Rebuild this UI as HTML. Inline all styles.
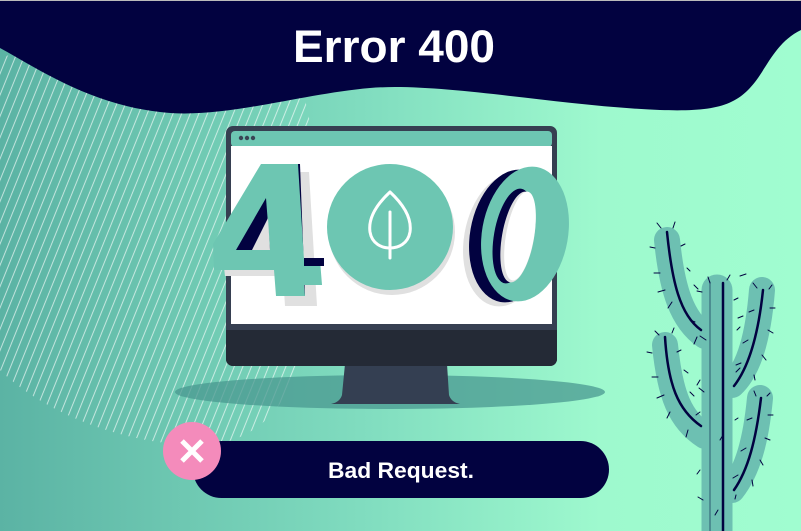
<!DOCTYPE html>
<html><head><meta charset="utf-8"><style>
html,body{margin:0;padding:0;width:801px;height:531px;overflow:hidden}
svg{display:block}
</style></head><body>
<svg width="801" height="531" viewBox="0 0 801 531" xmlns="http://www.w3.org/2000/svg">
<defs>
<linearGradient id="bg" x1="0" y1="0" x2="1" y2="0">
<stop offset="0" stop-color="#5bb3a4"/><stop offset="0.45" stop-color="#80dcbf"/><stop offset="0.75" stop-color="#9ef9ce"/><stop offset="1" stop-color="#a0fdd0"/>
</linearGradient>
<pattern id="hatch" width="8.6" height="531" patternUnits="userSpaceOnUse" patternTransform="skewX(-22)">
<line x1="4" y1="0" x2="4" y2="531" stroke="#ffffff" stroke-opacity="0.75" stroke-width="0.9"/>
</pattern>
<clipPath id="hc"><path d="M0 60 C60 20 230 0 290 60 C320 110 325 250 310 330 C295 400 260 445 200 445 C120 445 40 410 0 370 Z"/></clipPath>
</defs>
<rect width="801" height="531" fill="url(#bg)"/>
<rect width="801" height="531" fill="url(#hatch)" clip-path="url(#hc)"/>
<path d="M0 0 H801 V30 C780 40 770 60 760 75 C740 105 720 112 660 110 C560 106 440 82 370 88 C300 94 220 120 160 112 C90 104 40 70 0 48 Z" fill="#020240"/>
<rect x="0" y="0" width="801" height="1" fill="#bbbbbb"/>
<text x="293" y="62" textLength="202" lengthAdjust="spacingAndGlyphs" font-family="Liberation Sans, sans-serif" font-weight="bold" font-size="45" fill="#fff">Error 400</text>
<ellipse cx="390" cy="392" rx="215" ry="17" fill="#4a9890" opacity="0.75"/>
<path d="M345 364 H447 L449 395 Q451 402 460 404 H331 Q340 402 342 395 Z" fill="#343f52"/>
<rect x="226" y="126" width="331" height="240" rx="7" fill="#363f51"/>
<rect x="226" y="330" width="331" height="36" rx="7" fill="#242a36"/>
<rect x="226" y="330" width="331" height="10" fill="#242a36"/>
<rect x="231" y="131" width="321" height="16" rx="4" fill="#6dc6b2"/>
<rect x="231" y="146" width="321" height="178" fill="#ffffff"/>
<circle cx="241" cy="138" r="2.2" fill="#3a4455"/><circle cx="247" cy="138" r="2.2" fill="#3a4455"/><circle cx="253" cy="138" r="2.2" fill="#3a4455"/>
<!-- 4 -->
<g transform="translate(9,6)" fill="#e0e0e0"><path d="M261 166 H300 L308 300 H276 L274 270 H216 L213 244 Z M272 195 L240 246 H275 Z"/></g>
<path d="M276 164 H300 L305 296 H292 Z" fill="#020240"/>
<path d="M261 164 H298 L304 260 H320 L322 285 H304 L305 296 H276 L274 270 H214 L213 244 Z" fill="#6dc6b2"/>
<path d="M266 198 L236 250 H270 Z" fill="#020240"/>
<path d="M268 218 L252 250 H270 Z" fill="#e0e0e0"/>
<rect x="304" y="258" width="20" height="8" fill="#020240"/>
<!-- circle -->
<circle cx="392" cy="232" r="63" fill="#e0e0e0"/>
<circle cx="390" cy="227" r="63" fill="#6dc6b2"/>
<path d="M390 192 C376 205 368 218 370 232 C372 244 382 248 390 248 C398 248 408 244 410 232 C412 218 404 205 390 192 Z" fill="none" stroke="#fff" stroke-width="3" stroke-linejoin="round"/>
<line x1="390" y1="212" x2="390" y2="258" stroke="#fff" stroke-width="3" stroke-linecap="round"/>
<!-- 0 -->
<ellipse cx="506" cy="240" rx="42" ry="67" transform="rotate(10 506 240)" fill="#e0e0e0"/>
<ellipse cx="512" cy="236" rx="42" ry="67" transform="rotate(10 512 236)" fill="#020240"/>
<ellipse cx="525" cy="234" rx="43" ry="68" transform="rotate(10 525 234)" fill="#6dc6b2"/>
<ellipse cx="513" cy="236" rx="19" ry="48" transform="rotate(10 513 236)" fill="#020240"/>
<ellipse cx="518" cy="237" rx="16" ry="46" transform="rotate(10 518 237)" fill="#e0e0e0"/>
<ellipse cx="520" cy="236" rx="14" ry="45" transform="rotate(10 520 236)" fill="#ffffff"/>
<!-- cactus -->
<g stroke-linecap="round" fill="none">
<g stroke="#6dc0b2">
<path d="M717 290 V531" stroke-width="31"/>
<path d="M667 240 C672 290 682 320 705 336" stroke-width="26"/>
<path d="M665 345 C670 395 680 420 705 436" stroke-width="26"/>
<path d="M762 290 C758 340 748 370 732 385" stroke-width="26"/>
<path d="M760 398 C756 440 748 470 732 490" stroke-width="26"/>
</g>
<g stroke="#020240" stroke-width="2.5">
<path d="M723 283 V531"/>
<path d="M667 232 C672 282 680 315 701 330"/>
<path d="M665 337 C668 385 678 410 701 426"/>
<path d="M763 290 C758 338 748 368 734 386"/>
<path d="M761 398 C756 440 748 470 734 490"/>
</g>
<path d="M710 282 V531" stroke="#2a5a70" stroke-width="1"/>
<g stroke="#020240" stroke-width="1">
<path d="M661 228 L657 223 M673 228 L675 222 M655 248 L650 247 M681 246 L685 244 M660 273 L654 273 M687 268 L690 271 M665 290 L658 292 M694 285 L698 289 M672 302 L668 308 M690 320 L695 322 M697 337 L694 344"/>
<path d="M659 335 L655 331 M672 333 L674 328 M652 353 L647 352 M677 352 L681 350 M658 377 L652 377 M684 370 L688 373 M664 395 L657 398 M690 392 L694 396 M670 412 L667 418 M696 415 L700 412 M688 430 L686 437"/>
<path d="M710 283 L708 277 M727 280 L730 275 M740 276 L746 274 M702 292 L697 291 M734 300 L738 298 M706 340 L700 336 M737 330 L740 327 M704 392 L699 388 M736 365 L741 363 M700 470 L697 474 M703 500 L698 497 M720 440 L723 435 M735 420 L738 418 M718 510 L715 515 M700 380 L697 385 M738 318 L743 316"/>
<path d="M757 288 L753 283 M769 289 L772 285 M770 308 L775 308 M754 310 L749 312 M768 330 L773 333 M748 340 L743 343 M762 355 L766 360 M740 368 L736 372 M754 375 L755 380"/>
<path d="M756 396 L754 391 M767 396 L770 393 M768 415 L773 415 M752 418 L747 420 M765 438 L770 440 M746 448 L741 451 M760 460 L763 465 M738 475 L733 478 M752 480 L753 486 M736 495 L735 499"/>
</g>
</g>
<!-- pill -->
<rect x="193" y="441" width="416" height="57" rx="28.5" fill="#020240"/>
<text x="328" y="478" textLength="146" lengthAdjust="spacingAndGlyphs" font-family="Liberation Sans, sans-serif" font-weight="bold" font-size="22" fill="#fff">Bad Request.</text>
<circle cx="192" cy="451" r="29" fill="#f48bbb"/>
<path d="M182 441 L202 461 M202 441 L182 461" stroke="#fff" stroke-width="5"/>
</svg>
</body></html>
